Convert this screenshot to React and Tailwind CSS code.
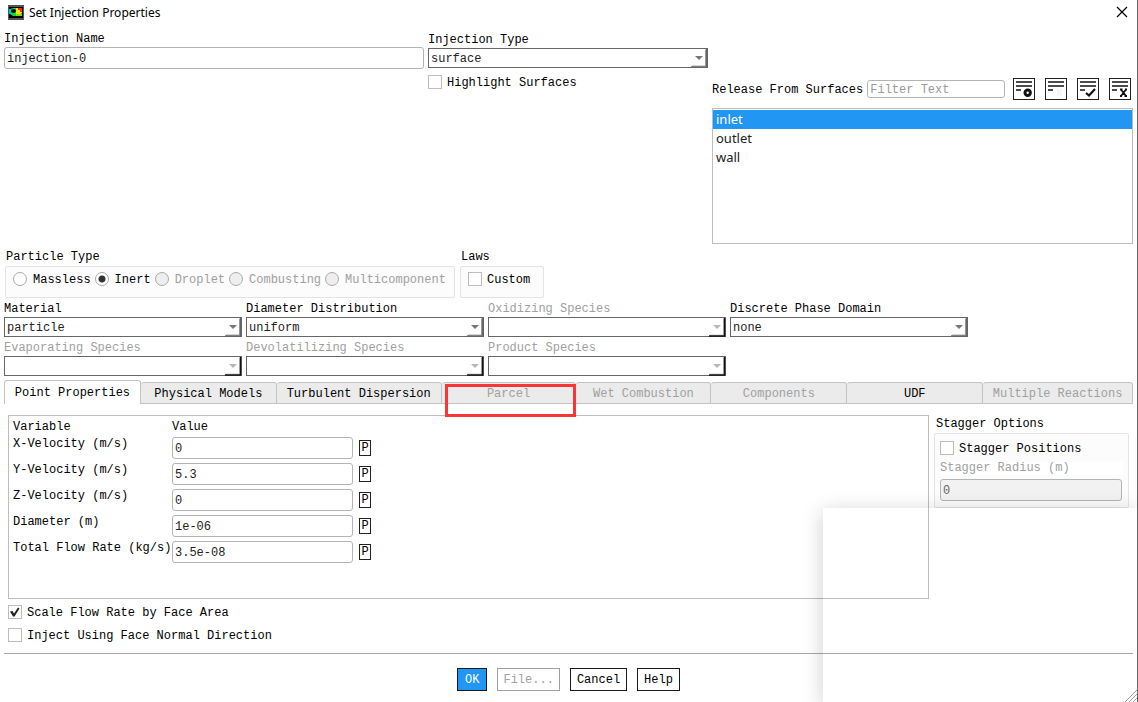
import React, { useState } from "react";

const TABS = [
    { name: "Point Properties", size: "flex-[136_1_0%]" },
    { name: "Physical Models", size: "flex-[136_1_0%]" },
    { name: "Turbulent Dispersion", size: "flex-[165_1_0%]" },
    { name: "Parcel", size: "flex-[135_1_0%]", disabled: true, marked: true },
    { name: "Wet Combustion", size: "flex-[135_1_0%]", disabled: true },
    { name: "Components", size: "flex-[136_1_0%]", disabled: true },
    { name: "UDF", size: "flex-[136_1_0%]" },
    { name: "Multiple Reactions", size: "flex-[150_1_0%]", disabled: true },
];

const PARTICLE_TYPES = [
    { name: "Massless" },
    { name: "Inert" },
    { name: "Droplet", disabled: true },
    { name: "Combusting", disabled: true },
    { name: "Multicomponent", disabled: true },
];

const POINT_FIELDS = [
    { id: "x-velocity", label: "X-Velocity (m/s)", value: "0" },
    { id: "y-velocity", label: "Y-Velocity (m/s)", value: "5.3" },
    { id: "z-velocity", label: "Z-Velocity (m/s)", value: "0" },
    { id: "diameter", label: "Diameter (m)", value: "1e-06" },
    { id: "flow-rate", label: "Total Flow Rate (kg/s)", value: "3.5e-08" },
];

const SURFACES = ["inlet", "outlet", "wall"];

const inputClass =
    "block w-full h-[22px] px-[2px] pt-px border border-[#b4b4b4] rounded-[3px] bg-white text-[#222] outline-none";

function AppIcon() {
    return (
        <svg width="16" height="15" viewBox="0 0 16 15">
            <rect width="16" height="15" fill="#555" />
            <rect x="1" y="2" width="14" height="11" fill="#000" />
            <path d="M2 4 L5 3 H10 V11 H5 L2 9 Z" fill="#00e040" />
            <path d="M1 4 H3 V9 H1 Z" fill="#00b8f0" />
            <path d="M8 3 H14 V8 L12 10 H8 Z" fill="#ffe600" />
            <path d="M10 3 H14 V7 H12 V5 H10 Z" fill="#ff2a00" />
            <path d="M8 9 H14 V11 H8 Z" fill="#7ce000" />
            <ellipse cx="5.5" cy="6" rx="2.5" ry="2" fill="#000" />
        </svg>
    );
}

function ListIcon({ kind }) {
    return (
        <svg width="20" height="20" viewBox="1 1 20 20" fill="none" stroke="#111">
            <path d="M3 4 H19 M3 8 H19 M3 12 H8" strokeWidth="1.6" />
            {kind === "match" && <circle cx="14.7" cy="14.7" r="2.7" strokeWidth="3" />}
            {kind === "none" && <path d="M12 11 L17 18 M17 11 L12 18" stroke="#f5f5f5" strokeWidth="2" />}
            {kind === "all" && <path d="M9 15 L12 17.5 L18 11" strokeWidth="2.2" />}
            {kind === "clear" && (
                <path d="M12 11.5 L17 18 M17 11.5 L12 18 M11 11.5 H13.5 M16 11.5 H18 M11 18 H13 M15.5 18 H18" strokeWidth="1.8" />
            )}
        </svg>
    );
}

function Dropdown({ id, label, value = "", disabled }) {
    return (
        <div>
            <label htmlFor={id} className={disabled ? "block text-[#a0a0a0]" : "block"}>
                {label}
            </label>
            <div className="relative">
                <select
                    id={id}
                    disabled={disabled}
                    className="block w-full h-5 appearance-none border border-r-2 border-[#666] bg-white pt-px pl-[2px] pr-5 text-[#222] opacity-100 outline-none"
                >
                    <option>{value}</option>
                </select>
                <svg className="absolute right-0 bottom-0 pointer-events-none" width="17" height="20" viewBox="0 0 17 20">
                    <path d="M4 8 H12 L8 12 Z" fill={disabled ? "#b8b8b8" : "#777"} />
                    <path d="M1 18 H14.5 V2" fill="none" stroke={disabled ? "#ccc" : "#aaa"} />
                    <path d="M0 19 H15.5 V1" fill="none" stroke={disabled ? "#111" : "#666"} strokeWidth="1.5" />
                </svg>
            </div>
        </div>
    );
}

function Checkbox({ label, checked, onChange }) {
    return (
        <label className="flex h-[14px] items-center gap-[5px]">
            <span className="relative block size-[14px] shrink-0">
                <input
                    type="checkbox"
                    checked={checked}
                    onChange={onChange}
                    className="block size-[14px] appearance-none border border-[#bdbdbd] bg-white"
                />
                {checked && (
                    <svg className="absolute inset-0 pointer-events-none" width="14" height="14" viewBox="0 0 14 14">
                        <path d="M2 6.5 L4.5 6 L6 8.5 L10 2.5 L11.5 3.5 L6.5 11.5 L5 11.5 Z" fill="#222" />
                    </svg>
                )}
            </span>
            <span className="whitespace-nowrap pt-[2px]">{label}</span>
        </label>
    );
}

function FooterButton({ children, primary, disabled }) {
    let look = "border-[#1a1a1a] bg-white px-[6px]";
    if (primary) look = "border-[#1a1a1a] bg-[#2196f3] text-white px-[7px]";
    if (disabled) look = "border-[#a0a0a0] bg-white text-[#a0a0a0] px-[5px]";
    return (
        <button type="button" disabled={disabled} className={`h-[23px] border pt-px ${look}`}>
            {children}
        </button>
    );
}

export default function App() {
    const [name, setName] = useState("injection-0");
    const [filter, setFilter] = useState("");
    const [surface, setSurface] = useState("inlet");
    const [particleType, setParticleType] = useState("Inert");
    const [activeTab, setActiveTab] = useState("Point Properties");
    const [values, setValues] = useState(POINT_FIELDS.map((f) => f.value));
    const [checks, setChecks] = useState({
        highlight: false,
        custom: false,
        stagger: false,
        scale: true,
        normal: false,
    });

    const toggle = (key) => setChecks((prev) => ({ ...prev, [key]: !prev[key] }));

    const handleValue = (index, value) => {
        setValues((prev) => prev.map((v, i) => (i === index ? value : v)));
    };

    return (
        <div className="relative flex min-h-screen flex-col overflow-hidden border-r border-[#666] bg-white font-['Liberation_Mono',monospace] text-[12px] leading-4 text-black">
            <header className="flex h-6 items-center justify-between pl-2 pr-[9px] font-['Noto_Sans',sans-serif]">
                <div className="flex items-center gap-[5px]">
                    <AppIcon />
                    <h1 className="pt-px">Set Injection Properties</h1>
                </div>
                <button type="button" aria-label="Close">
                    <svg width="12" height="12" viewBox="0 0 12 12" stroke="#000" strokeWidth="1.2">
                        <path d="M1 1 L11 11 M11 1 L1 11" />
                    </svg>
                </button>
            </header>

            <main className="px-1">
                <section className="grid grid-cols-[minmax(0,420fr)_minmax(0,280fr)_minmax(0,421fr)] gap-x-1 pt-2">
                    <div>
                        <label htmlFor="name" className="block leading-[15px]">Injection Name</label>
                        <input id="name" className={inputClass} value={name} onChange={(e) => setName(e.target.value)} />
                    </div>
                    <div className="flex flex-col gap-[7px]">
                        <Dropdown id="type" label="Injection Type" value="surface" />
                        <Checkbox label="Highlight Surfaces" checked={checks.highlight} onChange={() => toggle("highlight")} />
                    </div>
                    <div className="pt-[46px]">
                        <div className="flex items-center gap-2 pr-[2px]">
                            <label htmlFor="filter" className="-mr-1 whitespace-nowrap pt-[2px]">Release From Surfaces</label>
                            <input
                                id="filter"
                                placeholder="Filter Text"
                                value={filter}
                                onChange={(e) => setFilter(e.target.value)}
                                className="h-[18px] min-w-0 flex-1 rounded-[3px] border border-[#b4b4b4] px-[2px] pt-px outline-none placeholder:text-[#999]"
                            />
                            <div className="flex gap-[10px]">
                                {["match", "none", "all", "clear"].map((kind) => (
                                    <button key={kind} type="button" aria-label={kind} className="size-[22px] border border-[#222]">
                                        <ListIcon kind={kind} />
                                    </button>
                                ))}
                            </div>
                        </div>
                        <ul className="mt-2 h-[136px] border border-[#bdbdbd] pt-px font-['Noto_Sans',sans-serif] text-[13px] leading-[19px]">
                            {SURFACES.map((item) => (
                                <li key={item}>
                                    <button
                                        type="button"
                                        onClick={() => setSurface(item)}
                                        className={`block w-full px-[3px] text-left ${surface === item ? "bg-[#2196f3] text-white" : "text-[#222]"}`}
                                    >
                                        {item}
                                    </button>
                                </li>
                            ))}
                        </ul>
                    </div>
                </section>

                <section className="mt-[5px] flex gap-[5px] pl-px">
                    <div>
                        <h2 className="pl-px">Particle Type</h2>
                        <div className="mt-px flex h-8 w-[450px] gap-1 rounded-[2px] border border-[#e4e4e4] bg-[#fcfcfc] pt-[5px] pl-[7px]">
                            {PARTICLE_TYPES.map((type) => (
                                <label
                                    key={type.name}
                                    className={`flex h-[14px] items-center gap-[6px] ${type.disabled ? "text-[#a0a0a0]" : ""}`}
                                >
                                    <input
                                        type="radio"
                                        name="particle-type"
                                        disabled={type.disabled}
                                        checked={particleType === type.name}
                                        onChange={() => setParticleType(type.name)}
                                        className="size-[14px] shrink-0 appearance-none rounded-full border border-[#aaa] bg-white checked:bg-[radial-gradient(circle,#333_3px,white_4px)] disabled:bg-[#eee]"
                                    />
                                    <span className="pt-[2px]">{type.name}</span>
                                </label>
                            ))}
                        </div>
                    </div>
                    <div>
                        <h2 className="pl-px">Laws</h2>
                        <div className="mt-px h-8 w-[84px] rounded-[2px] border border-[#e4e4e4] bg-[#fcfcfc] pt-[5px] pl-[7px]">
                            <Checkbox label="Custom" checked={checks.custom} onChange={() => toggle("custom")} />
                        </div>
                    </div>
                </section>

                <section className="mt-[3px] grid w-[964px] max-w-full grid-cols-4 gap-x-1 gap-y-[3px]">
                    <Dropdown id="material" label="Material" value="particle" />
                    <Dropdown id="distribution" label="Diameter Distribution" value="uniform" />
                    <Dropdown id="oxidizing" label="Oxidizing Species" disabled />
                    <Dropdown id="domain" label="Discrete Phase Domain" value="none" />
                    <Dropdown id="evaporating" label="Evaporating Species" disabled />
                    <Dropdown id="devolatilizing" label="Devolatilizing Species" disabled />
                    <Dropdown id="product" label="Product Species" disabled />
                </section>

                <div role="tablist" className="mt-1 flex items-end">
                    {TABS.map((tab) => (
                        <button
                            key={tab.name}
                            type="button"
                            role="tab"
                            aria-selected={activeTab === tab.name}
                            disabled={tab.disabled}
                            onClick={() => setActiveTab(tab.name)}
                            className={`relative min-w-0 whitespace-nowrap rounded-t-[3px] border-t border-r border-[#c4c4c4] pt-px disabled:text-[#a0a0a0] ${tab.size} ${
                                activeTab === tab.name ? "h-6 border-l bg-white" : "h-[22px] border-b bg-[#ebebeb]"
                            }`}
                        >
                            {tab.name}
                            {tab.marked && <span className="absolute top-px -right-px -bottom-[14px] left-[3px] border-3 border-[#fb3535]" />}
                        </button>
                    ))}
                </div>

                <section className="mt-[11px] flex gap-[5px] pr-1 pl-1">
                    <div className="h-[184px] flex-1 border border-[#bdbdbd] pt-[3px] pl-1">
                        <div className="grid grid-cols-[159px_181px] leading-4">
                            <span>Variable</span>
                            <span>Value</span>
                        </div>
                        <div className="mt-[2px] flex flex-col gap-1">
                            {POINT_FIELDS.map((field, i) => (
                                <div key={field.id} className="grid grid-cols-[159px_181px_18px]">
                                    <label htmlFor={field.id} className="whitespace-nowrap leading-[14px]">{field.label}</label>
                                    <input
                                        id={field.id}
                                        className={inputClass}
                                        value={values[i]}
                                        onChange={(e) => handleValue(i, e.target.value)}
                                    />
                                    <button
                                        type="button"
                                        className="ml-[6px] h-4 w-3 self-center border border-[#222] leading-[14px]"
                                    >
                                        P
                                    </button>
                                </div>
                            ))}
                        </div>
                    </div>
                    <div className="w-[195px]">
                        <h2 className="pl-[2px] leading-[18px]">Stagger Options</h2>
                        <div className="rounded-[2px] border border-[#e4e4e4] bg-[#fcfcfc] px-[5px] pt-[7px] pb-[6px]">
                            <Checkbox label="Stagger Positions" checked={checks.stagger} onChange={() => toggle("stagger")} />
                            <label htmlFor="radius" className="mt-[7px] mb-1 block bg-white leading-[13px] text-[#a0a0a0]">
                                Stagger Radius (m)
                            </label>
                            <input
                                id="radius"
                                disabled
                                value="0"
                                className="block h-[22px] w-[182px] rounded-[3px] border border-[#b4b4b4] bg-[#f2f2f2] px-[2px] pt-px text-[#666]"
                            />
                        </div>
                    </div>
                </section>

                <section className="mt-[6px] flex flex-col gap-[9px] pl-1">
                    <Checkbox label="Scale Flow Rate by Face Area" checked={checks.scale} onChange={() => toggle("scale")} />
                    <Checkbox label="Inject Using Face Normal Direction" checked={checks.normal} onChange={() => toggle("normal")} />
                </section>

                <footer className="mt-[11px] flex justify-center gap-[10px] border-t border-[#a8a8a8] pt-[14px]">
                    <FooterButton primary>OK</FooterButton>
                    <FooterButton disabled>File...</FooterButton>
                    <FooterButton>Cancel</FooterButton>
                    <FooterButton>Help</FooterButton>
                </footer>
            </main>

            <div className="pointer-events-none absolute right-0 bottom-0 h-[194px] w-[314px] shadow-[0_4px_20px_rgba(0,0,0,0.2)]" />
            <svg className="absolute right-0 bottom-0" width="12" height="12" viewBox="0 0 12 12" stroke="#999">
                <path d="M0 12 L12 0 M4 12 L12 4 M8 12 L12 8" />
            </svg>
        </div>
    );
}
